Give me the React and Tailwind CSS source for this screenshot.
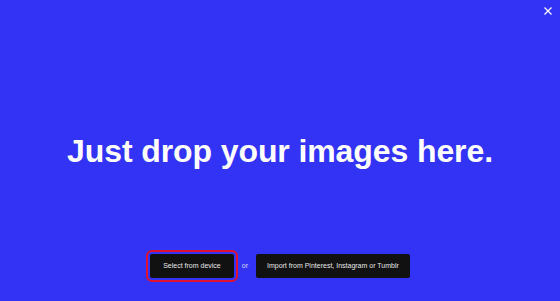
export default function App() {
  return (
    <div className="flex h-[301px] w-full flex-col bg-[#3333f5] font-['Liberation_Sans',Arial,sans-serif] text-white">
      <div className="flex h-[48px] justify-end">
        <button className="mr-[7px] mt-[5px] flex h-[11px] w-[11px] items-center justify-center">
          <svg width="10" height="10" viewBox="0 0 10 10" fill="none" stroke="white" strokeWidth="1.2">
            <path d="M1.5 1.5 L8.5 8.5 M8.5 1.5 L1.5 8.5" />
          </svg>
        </button>
      </div>
      <main className="flex flex-1 items-center justify-center">
        <h1 className="text-[32px] font-bold tracking-[-0.1px]">Just drop your images here.</h1>
      </main>
      <div className="flex h-[48px] items-start justify-center gap-2 pt-[1px]">
        <button className="h-[24px] rounded-[2px] bg-[#111111] px-[13px] text-[7px] text-[#e6e6e6] outline-2 outline-offset-2 outline-[#e0122f]">
          Select from device
        </button>
        <span className="h-[24px] leading-[24px] text-[7px] text-[#d8dcff]">or</span>
        <button className="h-[24px] rounded-[2px] bg-[#111111] px-[11px] text-[7px] text-[#e6e6e6]">
          Import from Pinterest, Instagram or Tumblr
        </button>
      </div>
    </div>
  );
}
